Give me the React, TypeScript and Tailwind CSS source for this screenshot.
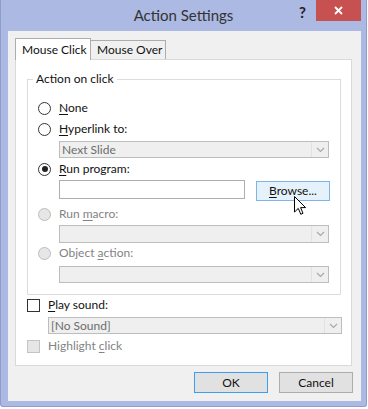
import React from 'react';

const font = { fontFamily: 'Lato, "Open Sans", "Liberation Sans", sans-serif' };

const Key = ({ children }: { children: React.ReactNode }) => (
  <span className="underline decoration-1 underline-offset-2">{children}</span>
);

const Radio = ({ checked = false, disabled = false }: { checked?: boolean; disabled?: boolean }) => (
  <span
    className={`w-[13px] h-[13px] rounded-full border flex items-center justify-center shrink-0 ${
      disabled ? 'bg-[#e6e6e6] border-[#bcbcbc]' : 'bg-white border-[#333]'
    }`}
  >
    {checked && <span className="w-[6px] h-[6px] rounded-full bg-[#222]" />}
  </span>
);

const Check = ({ disabled = false }: { disabled?: boolean }) => (
  <span
    className={`w-[13px] h-[13px] border shrink-0 ${
      disabled ? 'bg-[#e6e6e6] border-[#c4c4c4]' : 'bg-white border-[#333]'
    }`}
  />
);

const Combo = ({ text = '', className = '' }: { text?: string; className?: string }) => (
  <div className={`flex items-stretch bg-[#efefef] border border-[#bdbdbd] ${className}`}>
    <span className="flex-1 pl-[2px] text-[#6d6d6d] leading-none flex items-center">{text}</span>
    <span className="w-[17px] border-l border-[#e2e2e2] flex items-center justify-center">
      <svg width="9" height="6" viewBox="0 0 9 6">
        <path d="M1 1 L4.5 4.5 L8 1" fill="none" stroke="#a8a8a8" strokeWidth="1.2" />
      </svg>
    </span>
  </div>
);

const RadioRow = ({
  children,
  checked,
  disabled,
  className = '',
}: {
  children: React.ReactNode;
  checked?: boolean;
  disabled?: boolean;
  className?: string;
}) => (
  <div className={`h-4 flex items-center gap-[8px] ${className}`}>
    <Radio checked={checked} disabled={disabled} />
    <span className={disabled ? 'text-[#838383]' : 'text-[#111]'}>{children}</span>
  </div>
);

export default function App() {
  return (
    <div className="w-[368px] h-[409px] bg-white relative text-[12px] leading-4" style={font}>
      <div className="w-[367px] h-[407px] bg-[#abb9e3] border-x border-b border-[#8e9dcc] rounded-b-[3px] flex flex-col">
        {/* title bar */}
        <div className="h-[31px] relative shrink-0">
          <div className="text-center text-[15px] text-[#333] leading-[31px]">Action Settings</div>
          <span className="absolute left-[298px] top-[5px] text-[15px] font-bold text-[#222] leading-none">?</span>
          <div className="absolute left-[315px] top-0 w-[45px] h-[21px] bg-[#c75050] flex items-center justify-center">
            <svg width="9" height="9" viewBox="0 0 9 9">
              <path d="M1 1 L8 8 M8 1 L1 8" stroke="white" strokeWidth="1.8" />
            </svg>
          </div>
        </div>

        {/* client */}
        <div className="flex-1 ml-[7px] mr-[5px] mb-[5px] bg-[#f0f0f0] flex flex-col">
          {/* tabs */}
          <div className="flex items-end pl-[7px] pt-[7px] h-[28px]">
            <div className="w-[76px] h-[22px] bg-white border border-b-0 border-[#adadad] pl-[6px] pt-[3px] text-[#111] relative z-10 -mb-px">
              Mouse Click
            </div>
            <div className="w-[75px] h-[19px] bg-[#f0f0f0] border border-l-0 border-b-0 border-[#adadad] pl-[6px] pt-[1px] text-[#111]">
              Mouse Over
            </div>
          </div>

          {/* panel */}
          <div className="mx-[7px] w-[337px] h-[307px] bg-white border border-[#d9d9d9] flex flex-col">
            {/* group box */}
            <div className="ml-[11px] mt-[19px] w-[314px] h-[216px] border border-[#dcdcdc] relative pl-[10px] pt-[20px] flex flex-col">
              <span className="absolute left-[5px] -top-[9px] bg-white px-[3px] text-[#111]">Action on click</span>

              <RadioRow>
                <Key>N</Key>one
              </RadioRow>
              <RadioRow className="mt-[5px]">
                <Key>H</Key>yperlink to:
              </RadioRow>
              <Combo text="Next Slide" className="ml-[21px] mt-[4px] w-[270px] h-[17px]" />
              <RadioRow checked className="mt-[3px]">
                <Key>R</Key>un program:
              </RadioRow>
              <div className="ml-[21px] mt-[3px] h-[21px] flex items-start gap-[11px]">
                <div className="w-[186px] h-[19px] bg-white border border-[#abadb3]" />
                <div className="w-[74px] h-[20px] mt-px bg-[#e5f1fb] border border-[#7eb4ea] flex items-center justify-center text-[#111]">
                  <span>
                    <Key>B</Key>rowse...
                  </span>
                </div>
              </div>
              <RadioRow disabled className="mt-[5px]">
                Run <Key>m</Key>acro:
              </RadioRow>
              <Combo className="ml-[21px] mt-[3px] w-[270px] h-[18px]" />
              <RadioRow disabled className="mt-[2px]">
                Object <Key>a</Key>ction:
              </RadioRow>
              <Combo className="ml-[21px] mt-[5px] w-[270px] h-[17px]" />
            </div>

            {/* sound */}
            <div className="ml-[11px] mt-[2px] h-4 flex items-center gap-[8px]">
              <Check />
              <span className="text-[#111]">
                <Key>P</Key>lay sound:
              </span>
            </div>
            <Combo text="[No Sound]" className="ml-[32px] mt-[4px] w-[294px] h-[17px]" />
            <div className="ml-[11px] mt-[4px] h-4 flex items-center gap-[8px]">
              <Check disabled />
              <span className="text-[#838383]">
                Highlight <Key>c</Key>lick
              </span>
            </div>
          </div>

          {/* buttons */}
          <div className="mt-[6px] flex justify-end gap-[11px] pr-[8px]">
            <div className="w-[74px] h-[21px] bg-[#e1e1e1] border border-[#3c9ef0] flex items-center justify-center text-[#111]">
              OK
            </div>
            <div className="w-[74px] h-[21px] bg-[#e1e1e1] border border-[#adadad] flex items-center justify-center text-[#111]">
              Cancel
            </div>
          </div>
        </div>
      </div>

      {/* mouse pointer */}
      <svg className="absolute left-[294px] top-[196px]" width="13" height="20" viewBox="0 0 13 20">
        <path
          d="M0.5 0.5 L0.5 16 L4.3 12.4 L6.8 18.3 L9 17.3 L6.6 11.6 L11.6 11.6 Z"
          fill="white"
          stroke="black"
          strokeWidth="1"
          strokeLinejoin="round"
        />
      </svg>
    </div>
  );
}
